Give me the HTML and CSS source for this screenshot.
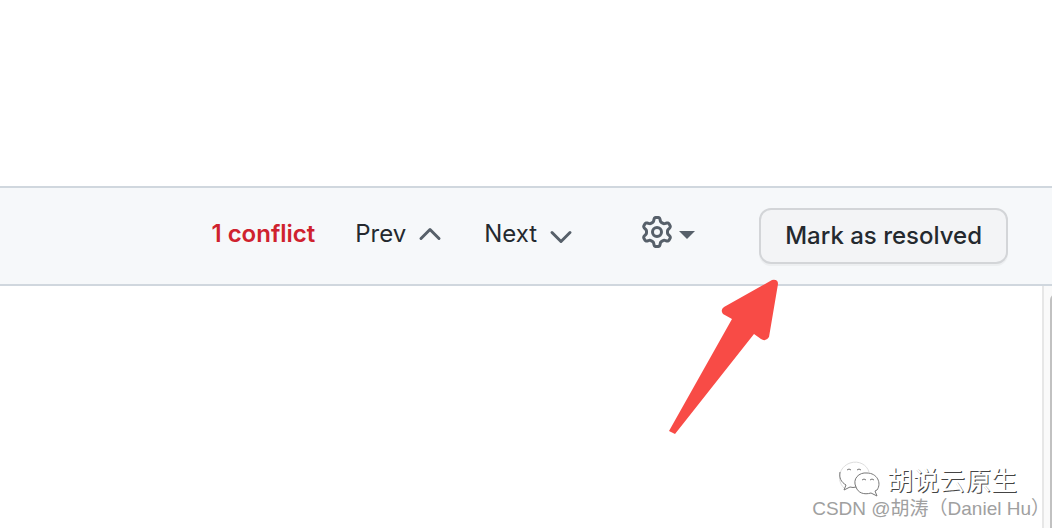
FILE: index.html
```html
<!DOCTYPE html>
<html lang="en">
<head>
<meta charset="utf-8">
<title>Resolve conflicts</title>
<link rel="stylesheet" href="styles.css">
</head>
<body>
<header class="top"></header>
<div class="toolbar">
  <div class="controls">
    <strong class="conflicts">1 conflict</strong>
    <button class="nav prev" type="button">Prev
      <svg class="chevron" viewBox="0 0 24 16" aria-hidden="true"><path d="M3 12.500 12 3.500 21 12.500"/></svg>
    </button>
    <button class="nav next" type="button">Next
      <svg class="chevron down" viewBox="0 0 24 16" aria-hidden="true"><path d="M3 3.500 12 12.500 21 3.500"/></svg>
    </button>
    <button class="settings" type="button" aria-label="Settings">
      <svg class="gear" viewBox="0 0 16 16" aria-hidden="true"><path d="M8 0a8.2 8.2 0 0 1 .701.031C9.444.095 9.99.645 10.16 1.29l.288 1.107c.018.066.079.158.212.224.231.114.454.243.668.386.123.082.233.09.299.071l1.103-.303c.644-.176 1.392.021 1.82.63.27.385.506.792.704 1.218.315.675.111 1.422-.364 1.891l-.814.806c-.049.048-.098.147-.088.294.016.257.016.515 0 .772-.01.147.038.246.088.294l.814.806c.475.469.679 1.216.364 1.891a7.977 7.977 0 0 1-.704 1.217c-.428.61-1.176.807-1.82.63l-1.102-.302c-.067-.019-.177-.011-.3.071a5.909 5.909 0 0 1-.668.386c-.133.066-.194.158-.211.224l-.29 1.106c-.168.646-.715 1.196-1.458 1.26a8.006 8.006 0 0 1-1.402 0c-.743-.064-1.289-.614-1.458-1.26l-.289-1.106c-.018-.066-.079-.158-.212-.224a5.738 5.738 0 0 1-.668-.386c-.123-.082-.233-.09-.299-.071l-1.103.303c-.644.176-1.392-.021-1.82-.63a8.12 8.12 0 0 1-.704-1.218c-.315-.675-.111-1.422.363-1.891l.815-.806c.05-.048.098-.147.088-.294a6.214 6.214 0 0 1 0-.772c.01-.147-.038-.246-.088-.294l-.815-.806C.635 6.045.431 5.298.746 4.623a7.92 7.92 0 0 1 .704-1.217c.428-.61 1.176-.807 1.82-.63l1.102.302c.067.019.177.011.3-.071.214-.143.437-.272.668-.386.133-.066.194-.158.211-.224l.29-1.106C6.009.645 6.556.095 7.299.03 7.53.01 7.764 0 8 0Zm-.571 1.525c-.036.003-.108.036-.137.146l-.289 1.105c-.147.561-.549.967-.998 1.189-.173.086-.34.183-.5.29-.417.278-.97.423-1.529.27l-1.103-.303c-.109-.03-.175.016-.195.045-.22.312-.412.644-.573.99-.014.031-.021.11.059.19l.815.806c.411.406.562.957.53 1.456a4.709 4.709 0 0 0 0 .582c.032.499-.119 1.05-.53 1.456l-.815.806c-.081.08-.073.159-.059.19.162.346.353.677.573.989.02.03.085.076.195.046l1.102-.303c.56-.153 1.113-.008 1.53.27.161.107.328.204.501.29.447.222.85.629.997 1.189l.289 1.105c.029.109.101.143.137.146a6.6 6.6 0 0 0 1.142 0c.036-.003.108-.036.137-.146l.289-1.105c.147-.561.549-.967.998-1.189.173-.086.34-.183.5-.29.417-.278.97-.423 1.529-.27l1.103.303c.109.029.175-.016.195-.045.22-.313.411-.644.573-.99.014-.031.021-.11-.059-.19l-.815-.806c-.411-.406-.562-.957-.53-1.456a4.709 4.709 0 0 0 0-.582c-.032-.499.119-1.05.53-1.456l.815-.806c.081-.08.073-.159.059-.19a6.464 6.464 0 0 0-.573-.989c-.02-.03-.085-.076-.195-.046l-1.102.303c-.56.153-1.113.008-1.53-.27a4.44 4.44 0 0 0-.501-.29c-.447-.222-.85-.629-.997-1.189l-.289-1.105c-.029-.11-.101-.143-.137-.146a6.6 6.6 0 0 0-1.142 0ZM11 8a3 3 0 1 1-6 0 3 3 0 0 1 6 0ZM9.500 8a1.500 1.500 0 1 0-3.001.001A1.500 1.500 0 0 0 9.500 8Z"/></svg>
      <svg class="caret" viewBox="0 0 16 8" aria-hidden="true"><path d="M0 0h16L8 8z"/></svg>
    </button>
  </div>
  <button class="resolve" type="button">Mark as resolved</button>
  <svg class="arrow" viewBox="0 0 112 156" aria-hidden="true"><path d="M1 152 64 40 55 35Q52 31 56 28L104 1Q110 0 110 5L101 58Q98 63 93 60L86 55 7 155Z"/></svg>
</div>
<main class="editor">
  <div class="credits">
    <div class="account">
      <svg class="bubbles" viewBox="0 0 42 36" aria-hidden="true">
        <path class="faint" d="M5 27C-3 19 0 6 11 2 20-1 28 4 30 11"/>
        <path d="M1 11C0 17 2 21 7 24L5 29 11 26Q14 27 17 26M8 9q2-2 4 0M18 9q2-2 4 0"/>
        <path d="M17 26C13 18 20 11 28 12 38 12 43 22 38 29L36 30 38 35 32 32C25 34 19 32 17 26M23 19q2-2 4 0M31 19q2-2 4 0"/>
      </svg>
      <span class="name" lang="zh-CN">胡说云原生</span>
    </div>
    <div class="source" lang="zh-CN">CSDN @胡涛（Daniel Hu）</div>
  </div>
  <div class="track"><div class="thumb"></div></div>
</main>
</body>
</html>
```
FILE: styles.css
```css
* { box-sizing: border-box; }

body {
  margin: 0;
  min-height: 100vh;
  display: flex;
  flex-direction: column;
  background: #fff;
  color: #24292f;
  font: 24px/36px Inter, "Noto Sans", sans-serif;
  overflow: hidden;
}

button {
  margin: 0;
  padding: 0;
  border: 0;
  background: none;
  color: inherit;
  font: inherit;
  white-space: nowrap;
}

svg { display: block; flex: none; }

.top { height: 186px; }

.toolbar {
  position: relative;
  display: flex;
  align-items: center;
  justify-content: flex-end;
  padding: 20px 44px;
  border: solid #d0d7de;
  border-width: 2px 0;
  background: #f6f8fa;
}

.controls {
  display: flex;
  align-items: center;
  padding-bottom: 4px;
  margin-right: 64px;
}

.conflicts {
  color: #cf222e;
  font-weight: 600;
  margin-right: 40px;
}

.nav {
  display: flex;
  align-items: center;
  gap: 12px;
}

.prev { margin-right: 42px; }
.next { margin-right: 68px; }

.chevron {
  width: 24px;
  height: 16px;
  fill: none;
  stroke: #57606a;
  stroke-width: 3;
  stroke-linecap: round;
  stroke-linejoin: round;
}

.down { margin-top: 6px; }

.settings {
  display: flex;
  align-items: center;
  gap: 6px;
  padding-bottom: 4px;
  fill: #57606a;
}

.gear { width: 32px; height: 32px; }
.caret { width: 16px; height: 8px; margin-top: 6px; }

.resolve {
  padding: 8px 24px;
  border: 2px solid #d3d5d8;
  border-radius: 12px;
  background: #f3f4f6;
  box-shadow: 0 2px 0 rgba(27, 31, 36, 0.04);
  font-weight: 500;
}

.arrow {
  position: absolute;
  z-index: 1;
  top: 91px;
  right: 272px;
  width: 112px;
  height: 156px;
  fill: #f84b46;
}

.editor {
  flex: 1;
  display: flex;
  justify-content: flex-end;
}

.credits {
  display: flex;
  flex-direction: column;
  align-items: flex-end;
  justify-content: flex-end;
  padding-bottom: 7px;
  white-space: nowrap;
}

.account {
  display: flex;
  align-items: center;
  gap: 6px;
  margin-right: 25px;
}

.bubbles {
  width: 42px;
  height: 36px;
  fill: none;
  stroke: #777;
  stroke-width: 1;
}

.faint { stroke: #ddd; }

.name {
  color: #fff;
  font: 26px/32px "Noto Sans CJK SC", sans-serif;
  text-shadow: 1px 1px 0 #444;
}

.source {
  margin-right: -8px;
  color: #a0a0a0;
  font: 19px/24px "Liberation Sans", "Noto Sans CJK SC", sans-serif;
}

.track {
  width: 10px;
  padding: 8px 0 0 6px;
  overflow: hidden;
  border-left: 2px solid #e7e7e7;
  background: #fafafa;
}

.thumb {
  width: 12px;
  height: 100%;
  border-radius: 6px 6px 0 0;
  background: #c1c1c1;
}
```
